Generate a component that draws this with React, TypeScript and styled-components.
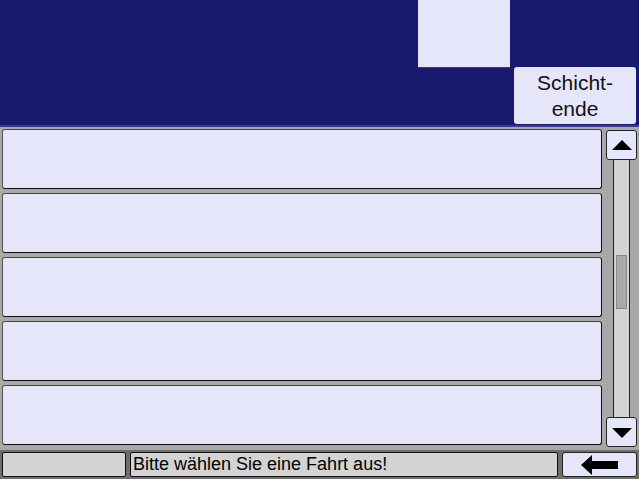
import React from "react";
import styled, { createGlobalStyle } from "styled-components";

const Global = createGlobalStyle`
  html, body { margin: 0; padding: 0; }
  body { width: 639px; height: 479px; overflow: hidden; background: #a8a8a8; font-family: "Liberation Sans", Arial, sans-serif; }
`;

const Screen = styled.div`
  width: 639px;
  height: 479px;
  display: flex;
  flex-direction: column;
  background: #a8a8a8;
`;

const Header = styled.div`
  background: #191970;
  border-bottom: 2px solid #3a3a88;
  display: flex;
  justify-content: flex-end;
  padding-right: 3px;
  gap: 4px;
  box-sizing: border-box;
  height: 127px;
`;

const Square = styled.div`
  width: 92px;
  height: 67px;
  background: #e6e6fa;
  box-shadow: 0 1px 0 #3a3a90;
`;

const HeaderButton = styled.div`
  align-self: flex-end;
  margin-bottom: 1px;
  width: 122px;
  height: 57px;
  box-sizing: border-box;
  background: #e6e6fa;
  border-radius: 3px;
  display: flex;
  align-items: center;
  justify-content: center;
  text-align: center;
  font-size: 21px;
  line-height: 26px;
  color: #111;
`;

const Main = styled.div`
  display: flex;
  padding: 2px 2px 0 2px;
  gap: 4px;
  height: 318px;
`;

const List = styled.div`
  flex: 1;
  display: flex;
  flex-direction: column;
  gap: 4px;
`;

const Row = styled.div`
  height: 60px;
  box-sizing: border-box;
  background: #e6e6fa;
  border: 1px solid #111;
  border-left-color: #555;
  border-top-color: #444;
  border-radius: 3px;
`;

const Scroll = styled.div`
  width: 31px;
  display: flex;
  flex-direction: column;
  align-items: center;
  padding-top: 1px;
`;

const ArrowBtn = styled.div`
  width: 31px;
  height: 30px;
  box-sizing: border-box;
  background: #e6e6fa;
  border: 1px solid #222;
  border-radius: 3px;
  display: flex;
  align-items: center;
  justify-content: center;
  flex-shrink: 0;
`;

const Track = styled.div`
  position: relative;
  width: 17px;
  flex: 1;
  box-sizing: border-box;
  background: #d3d3d3;
  border-left: 1px solid #222;
  border-right: 1px solid #222;
`;

const Thumb = styled.div`
  position: absolute;
  left: 2px;
  right: 2px;
  top: 95px;
  height: 52px;
  background: #a9a9a9;
  border: 1px solid #888;
`;

const Bottom = styled.div`
  margin-top: 3px;
  flex: 1;
  background: #6f6f6f;
  display: flex;
  align-items: stretch;
  gap: 4px;
  padding: 2px;
`;

const Box = styled.div<{ $w?: number; $flex?: boolean }>`
  ${(p) => (p.$flex ? "flex: 1;" : `width: ${p.$w}px;`)}
  box-sizing: border-box;
  background: #d3d3d3;
  border: 1px solid #111;
  border-radius: 2px;
  font-size: 18px;
  color: #000;
  display: flex;
  align-items: center;
  padding-left: 2px;
  white-space: nowrap;
`;

const BackBtn = styled.div`
  width: 75px;
  box-sizing: border-box;
  background: #e6e6fa;
  border: 1px solid #222;
  border-radius: 3px;
  display: flex;
  align-items: center;
  justify-content: center;
`;

export default function App() {
  return (
    <Screen>
      <Global />
      <Header>
        <Square />
        <HeaderButton>
          Schicht-
          <br />
          ende
        </HeaderButton>
      </Header>
      <Main>
        <List>
          <Row />
          <Row />
          <Row />
          <Row />
          <Row />
        </List>
        <Scroll>
          <ArrowBtn>
            <svg width="20" height="11" viewBox="0 0 20 11">
              <polygon points="10,0 20,10 0,10" fill="#000" />
            </svg>
          </ArrowBtn>
          <Track>
            <Thumb />
          </Track>
          <ArrowBtn>
            <svg width="20" height="11" viewBox="0 0 20 11">
              <polygon points="0,1 20,1 10,11" fill="#000" />
            </svg>
          </ArrowBtn>
        </Scroll>
      </Main>
      <Bottom>
        <Box $w={124} />
        <Box $flex>Bitte wählen Sie eine Fahrt aus!</Box>
        <BackBtn>
          <svg width="38" height="20" viewBox="0 0 38 20">
            <polygon points="0,10 11,0 11,6 37,6 37,14 11,14 11,20" fill="#000" />
          </svg>
        </BackBtn>
      </Bottom>
    </Screen>
  );
}
